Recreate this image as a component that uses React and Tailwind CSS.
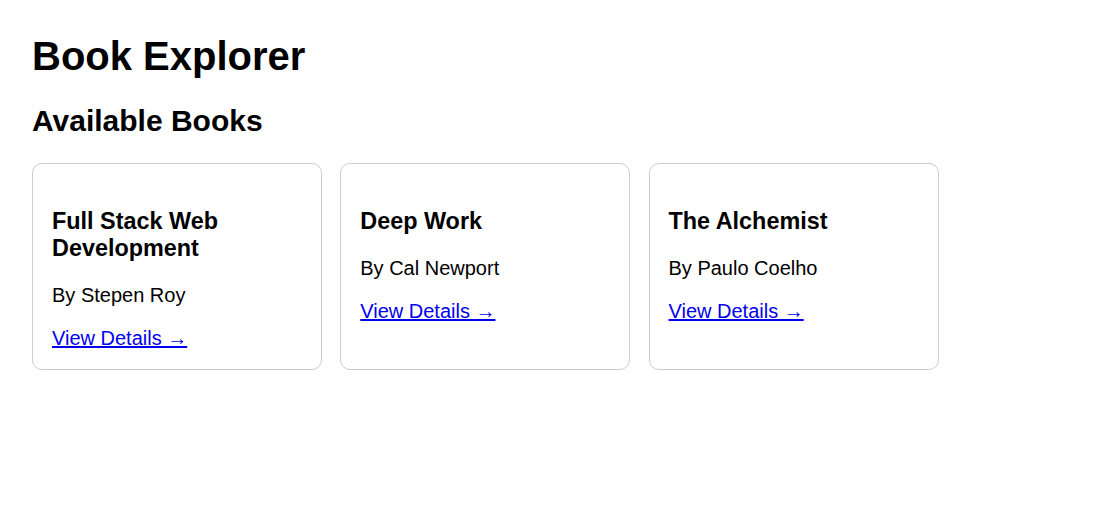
import React from "react";

const BOOKS = [
  { id: 1, title: "Full Stack Web Development", author: "Stepen Roy" },
  { id: 2, title: "Deep Work", author: "Cal Newport" },
  { id: 3, title: "The Alchemist", author: "Paulo Coelho" },
];

function BookCard({ book }) {
  return (
    <div className="w-[290px] shrink-0 border border-[#cccccc] rounded-[10px] px-[19px] pt-[21px] pb-[19px] bg-white">
      <h3 className="text-[23.4px] font-bold mt-[23.4px] mb-[22px]">{book.title}</h3>
      <p className="my-[20px]">By {book.author}</p>
      <a href="#" className="text-[#0000ee] underline">
        View Details →
      </a>
    </div>
  );
}

export default function App() {
  return (
    <div className="min-h-screen bg-white text-black font-['Liberation_Sans',Arial,sans-serif] text-[20px] leading-[normal] px-8 pt-[34px]">
      <h1 className="text-[40px] font-bold">Book Explorer</h1>
      <h2 className="text-[30px] font-bold mt-[25px] mb-[25px]">Available Books</h2>
      <div className="flex items-stretch gap-[18.25px]">
        {BOOKS.map((b) => (
          <BookCard key={b.id} book={b} />
        ))}
      </div>
    </div>
  );
}
